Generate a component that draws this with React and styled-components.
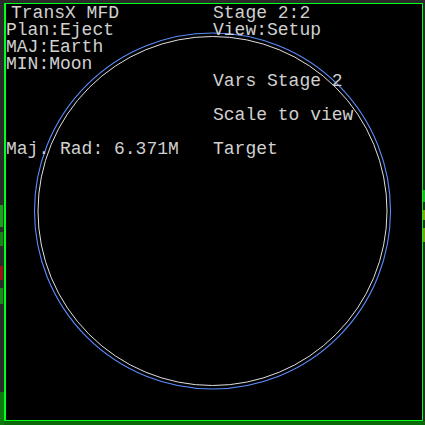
import React from "react";
import styled, { createGlobalStyle } from "styled-components";

const Global = createGlobalStyle`
  html, body { margin: 0; padding: 0; background: #2a2a2a; }
  body { width: 425px; height: 425px; overflow: hidden; }
`;

const Screen = styled.div`
  position: relative;
  width: 425px;
  height: 425px;
  background: #2a2a2a;
  padding: 3px 0 0 4px;
  box-sizing: border-box;
`;

const Strip = styled.div`
  position: absolute;
  left: ${(p) => p.$x}px;
  top: ${(p) => p.$y}px;
  width: ${(p) => p.$w}px;
  height: ${(p) => p.$h}px;
  background: ${(p) => p.$c};
`;

const Panel = styled.div`
  position: relative;
  width: 419px;
  height: 418px;
  box-sizing: border-box;
  background: #000;
  border: 1px solid #00ff1a;
  border-left-width: 2px;
  padding: 1px 0 0 0;
  display: grid;
  grid-template-columns: 207px 1fr;
  align-content: start;
  font-family: "Liberation Mono", "Courier New", monospace;
  font-size: 18px;
  line-height: 17px;
  color: #d0d0d0;
`;

const Column = styled.div`
  position: relative;
  z-index: 1;
  display: flex;
  flex-direction: column;
`;

const Line = styled.div`
  height: 17px;
  white-space: pre;
  padding-left: ${(p) => p.$indent || 0}px;
`;

const Orbit = styled.svg`
  position: absolute;
  left: 0;
  top: 0;
  z-index: 0;
  pointer-events: none;
  overflow: visible;
`;

export default function App() {
  const cx = 206.5;
  const cy = 207;
  return (
    <>
      <Global />
      <Screen>
        <Strip $x={0} $y={205} $w={3} $h={22} $c="#1aa31a" />
        <Strip $x={0} $y={232} $w={3} $h={14} $c="#128a12" />
        <Strip $x={0} $y={266} $w={3} $h={14} $c="#a01010" />
        <Strip $x={0} $y={288} $w={3} $h={16} $c="#139013" />
        <Strip $x={0} $y={392} $w={4} $h={33} $c="#0c7a0c" />
        <Strip $x={4} $y={421} $w={421} $h={4} $c="#0a6a0a" />
        <Strip $x={423} $y={190} $w={2} $h={12} $c="#2fa82f" />
        <Strip $x={423} $y={210} $w={2} $h={10} $c="#9a9a10" />
        <Strip $x={423} $y={228} $w={2} $h={14} $c="#8a9a10" />
        <Panel>
          <Orbit width="416" height="416" viewBox="0 0 416 416">
            <circle cx={cx} cy={cy} r={178} fill="none" stroke="#5b8cff" strokeWidth="1.1" />
            <circle cx={cx} cy={cy} r={174.5} fill="none" stroke="#e0e0e0" strokeWidth="1" />
          </Orbit>
          <Column>
            <Line $indent={5}>TransX MFD</Line>
            <Line>Plan:Eject</Line>
            <Line>MAJ:Earth</Line>
            <Line>MIN:Moon</Line>
            <Line> </Line>
            <Line> </Line>
            <Line> </Line>
            <Line> </Line>
            <Line>Maj. Rad: 6.371M</Line>
          </Column>
          <Column>
            <Line>Stage 2:2</Line>
            <Line>View:Setup</Line>
            <Line> </Line>
            <Line> </Line>
            <Line>Vars Stage 2</Line>
            <Line> </Line>
            <Line>Scale to view</Line>
            <Line> </Line>
            <Line>Target</Line>
          </Column>
        </Panel>
      </Screen>
    </>
  );
}
